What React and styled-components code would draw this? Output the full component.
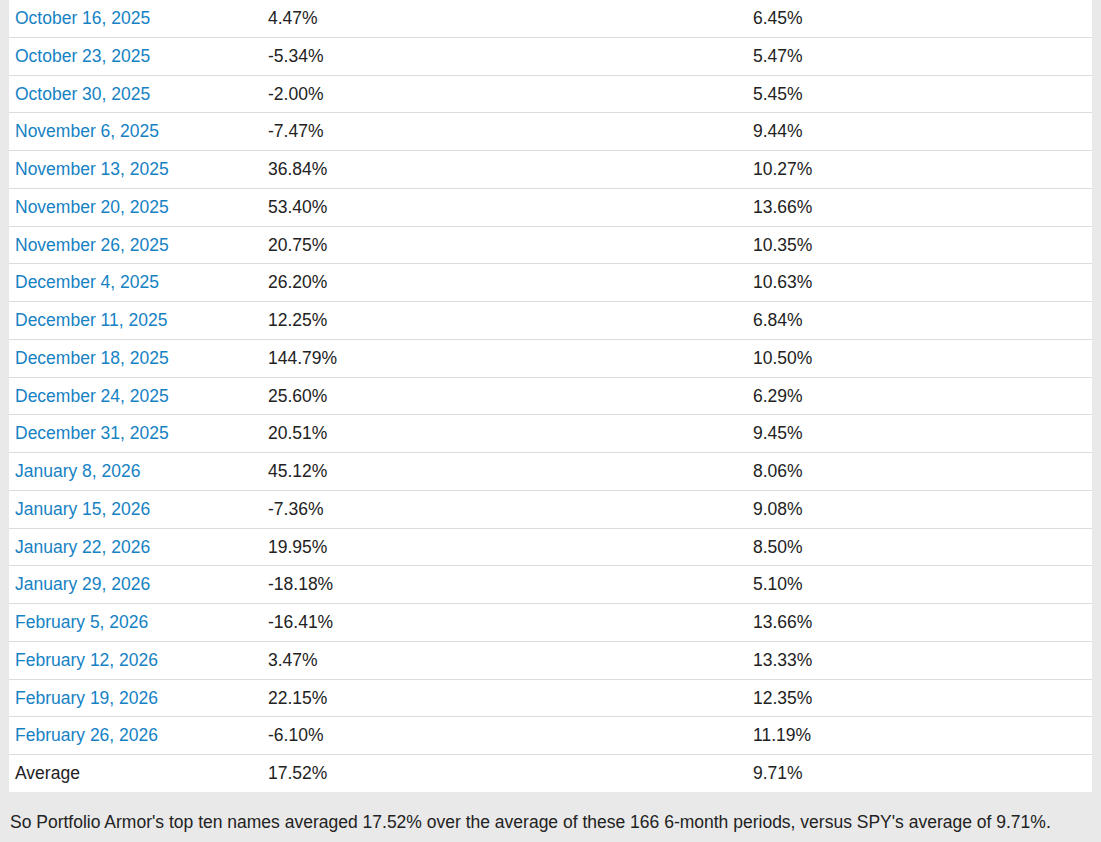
import React from "react";
import styled, { createGlobalStyle } from "styled-components";

const Global = createGlobalStyle`
  html, body { margin: 0; padding: 0; background: #e9e9e9; }
  body { font-family: "Liberation Sans", Arial, sans-serif; color: #222; }
`;

const Page = styled.div`
  padding: 0 9px;
`;

const Table = styled.table`
  width: 1083px;
  border-collapse: collapse;
  background: #fff;
  table-layout: fixed;
`;

const Row = styled.tr`
  border-bottom: 1px solid #dcdcdc;
  &:last-child { border-bottom: none; }
`;

const Cell = styled.td`
  padding: 8px 6px 7px 6px;
  font-size: 17.5px;
  line-height: 21.75px;
  color: ${(p) => (p.$link ? "#1682c4" : "#222")};
  white-space: nowrap;
`;

const Para = styled.p`
  margin: 18px 0 0 1px;
  font-size: 17.5px;
  line-height: 25px;
  color: #222;
`;

const rows = [
  ["October 16, 2025", "4.47%", "6.45%"],
  ["October 23, 2025", "-5.34%", "5.47%"],
  ["October 30, 2025", "-2.00%", "5.45%"],
  ["November 6, 2025", "-7.47%", "9.44%"],
  ["November 13, 2025", "36.84%", "10.27%"],
  ["November 20, 2025", "53.40%", "13.66%"],
  ["November 26, 2025", "20.75%", "10.35%"],
  ["December 4, 2025", "26.20%", "10.63%"],
  ["December 11, 2025", "12.25%", "6.84%"],
  ["December 18, 2025", "144.79%", "10.50%"],
  ["December 24, 2025", "25.60%", "6.29%"],
  ["December 31, 2025", "20.51%", "9.45%"],
  ["January 8, 2026", "45.12%", "8.06%"],
  ["January 15, 2026", "-7.36%", "9.08%"],
  ["January 22, 2026", "19.95%", "8.50%"],
  ["January 29, 2026", "-18.18%", "5.10%"],
  ["February 5, 2026", "-16.41%", "13.66%"],
  ["February 12, 2026", "3.47%", "13.33%"],
  ["February 19, 2026", "22.15%", "12.35%"],
  ["February 26, 2026", "-6.10%", "11.19%"],
];

export default function App() {
  return (
    <>
      <Global />
      <Page>
        <Table>
          <colgroup>
            <col style={{ width: "253px" }} />
            <col style={{ width: "485px" }} />
            <col style={{ width: "345px" }} />
          </colgroup>
          <tbody>
            {rows.map(([d, a, b]) => (
              <Row key={d}>
                <Cell $link>{d}</Cell>
                <Cell>{a}</Cell>
                <Cell>{b}</Cell>
              </Row>
            ))}
            <Row>
              <Cell>Average</Cell>
              <Cell>17.52%</Cell>
              <Cell>9.71%</Cell>
            </Row>
          </tbody>
        </Table>
        <Para>
          So Portfolio Armor's top ten names averaged 17.52% over the average of these 166 6-month periods, versus SPY's average of 9.71%.
        </Para>
      </Page>
    </>
  );
}
